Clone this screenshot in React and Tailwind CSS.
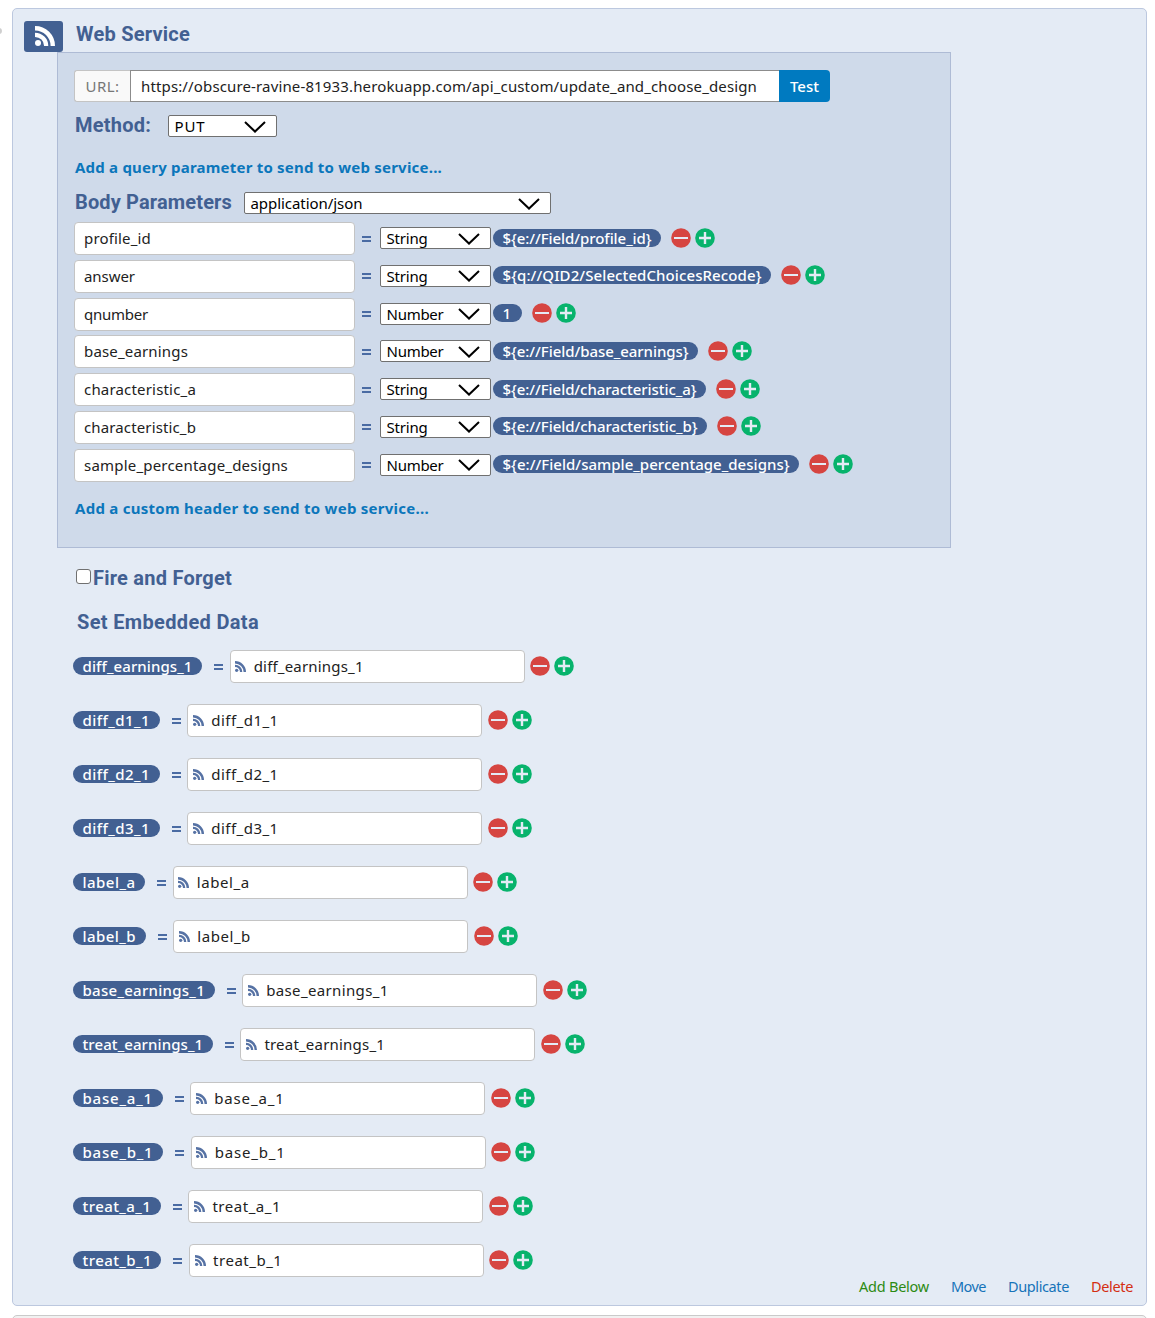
import { useLayoutEffect, useRef } from "react";

// Text set to a given width by adjusting its tracking.
function Fit({ w, children, className = "" }) {
  const ref = useRef(null);
  useLayoutEffect(() => {
    const el = ref.current;
    el.style.letterSpacing = "0px";
    const natural = el.firstChild.getBoundingClientRect().width;
    el.style.letterSpacing = `${(w - natural) / children.length}px`;
  }, [w, children]);
  return (
    <span ref={ref} className={`inline-block whitespace-nowrap ${className}`} style={{ width: w }}>
      <span>{children}</span>
    </span>
  );
}

function Rss({ className }) {
  return (
    <svg viewBox="0 0 20 20" className={className} fill="none" stroke="currentColor">
      <circle cx="3" cy="17" r="3" fill="currentColor" stroke="none" />
      <path d="M0 8.8A11.2 11.2 0 0 1 11.2 20" strokeWidth="4.2" />
      <path d="M0 2.2A17.8 17.8 0 0 1 17.8 20" strokeWidth="4.4" />
    </svg>
  );
}

function Actions({ className = "" }) {
  return (
    <div className={`mb-0.5 flex shrink-0 gap-1 ${className}`}>
      <svg viewBox="0 0 20 20" className="size-5">
        <circle cx="10" cy="10" r="9.8" fill="#d64541" />
        <path d="M3 10H17" stroke="#e4ebf5" strokeWidth="2" />
      </svg>
      <svg viewBox="0 0 20 20" className="size-5">
        <circle cx="10" cy="10" r="9.8" fill="#07b36c" />
        <path d="M4 10H16M10 4V16" stroke="#e4ebf5" strokeWidth="2.4" />
      </svg>
    </div>
  );
}

function Select({ label, w, className }) {
  return (
    <div className={`flex h-[22px] shrink-0 items-center justify-between rounded-[2px] border border-[#707070] bg-white pl-[5.5px] pr-[10.5px] text-black ${className}`}>
      <Fit w={w}>{label}</Fit>
      <svg viewBox="0 0 22 12" className="mt-px h-3 w-[22px]" fill="none" stroke="#000" strokeWidth="2">
        <path d="M1 1L11 10.5L21 1" />
      </svg>
    </div>
  );
}

function Pill({ label, w }) {
  return (
    <div className="mb-0.5 flex h-[18px] shrink-0 items-center rounded-full bg-[#426092] pl-[9.5px] font-medium text-white" style={{ width: w }}>
      <Fit w={w - 19}>{label}</Fit>
    </div>
  );
}

function Equals({ className }) {
  return (
    <svg viewBox="0 0 9 6" className={`h-1.5 w-[9px] shrink-0 ${className}`}>
      <path d="M0 1H9M0 5H9" stroke="#4a6ba3" strokeWidth="2" />
    </svg>
  );
}

const params = [
  ["profile_id", 67, "String", 41, "${e://Field/profile_id}", 168],
  ["answer", 51, "String", 41, "${q://QID2/SelectedChoicesRecode}", 278],
  ["qnumber", 64, "Number", 57, "1", 29],
  ["base_earnings", 104, "Number", 57, "${e://Field/base_earnings}", 205],
  ["characteristic_a", 112, "String", 41, "${e://Field/characteristic_a}", 213],
  ["characteristic_b", 112, "String", 41, "${e://Field/characteristic_b}", 214],
  ["sample_percentage_designs", 204, "Number", 57, "${e://Field/sample_percentage_designs}", 306],
];

const fields = [
  ["diff_earnings_1", 129],
  ["diff_d1_1", 86.5],
  ["diff_d2_1", 86.5],
  ["diff_d3_1", 86.5],
  ["label_a", 72],
  ["label_b", 72.6],
  ["base_earnings_1", 141.5],
  ["treat_earnings_1", 139.7],
  ["base_a_1", 89.5],
  ["base_b_1", 90],
  ["treat_a_1", 87.7],
  ["treat_b_1", 88.4],
];

const heading = "text-[20px] leading-6 font-bold text-[#426092] font-['Roboto',sans-serif]";

export default function App() {
  return (
    <div className="flex h-[1318px] w-[1155px] overflow-hidden bg-white font-['Noto_Sans',sans-serif] text-[15px] leading-[18px] text-[#222]">
      <div className="mt-7 h-1.5 w-3 shrink-0">
        <div className="-ml-1 size-1.5 rounded-full bg-[#cfcfcf]" />
      </div>
      <div className="mt-2 w-[1135px] shrink-0">
        <section className="flex h-[1298px] flex-col rounded-[5px] border border-[#bcc8df] bg-[#e4ebf5]">
          <header className="flex h-[43px] shrink-0 pl-[11px] pt-3">
            <div className="relative z-10 flex h-[31px] w-[39px] items-center justify-center rounded-[3px] bg-[#426092] text-white">
              <Rss className="mb-px ml-[2px] size-5" />
            </div>
            <h2 className={`ml-[13px] mt-px ${heading}`}><Fit w={114}>Web Service</Fit></h2>
          </header>

          <div className="ml-11 h-[496px] w-[894px] shrink-0 border border-[#aebbd5] bg-[#cfdaea] pl-4 pt-[17px]">
            <div className="flex h-8 w-[756px]">
              <div className="flex w-14 items-center rounded-l-[3px] border border-r-0 border-[#c4c4c4] bg-[#f9f9f9] pb-px pl-[10.5px] text-[#777]">
                <Fit w={34}>URL:</Fit>
              </div>
              <div className="flex w-[649px] items-center border border-r-0 border-[#8c8c8c] bg-white pl-2.5">
                <Fit w={616}>https://obscure-ravine-81933.herokuapp.com/api_custom/update_and_choose_design</Fit>
              </div>
              <div className="flex flex-1 items-center rounded-r-[4px] bg-[#007ac0] pb-px pl-[11px] font-medium text-white">
                <Fit w={29}>Test</Fit>
              </div>
            </div>

            <div className="mt-[11px] flex h-6 items-center">
              <h3 className={`ml-px ${heading}`}><Fit w={76}>Method:</Fit></h3>
              <Select label="PUT" w={31} className="mt-0.5 ml-[17px] w-[109px]" />
            </div>

            <div className="ml-px mt-[21px] h-[22px] font-bold text-[#0b76bb]">
              <Fit w={367}>Add a query parameter to send to web service...</Fit>
            </div>

            <div className="mt-2.5 flex h-6 items-center">
              <h3 className={`ml-px ${heading}`}><Fit w={157}>Body Parameters</Fit></h3>
              <Select label="application/json" w={112} className="mt-0.5 ml-3 w-[307px]" />
            </div>

            <div className="mt-2 flex flex-col gap-[4.8px]">
              {params.map(([name, nw, type, tw, value, vw]) => (
                <div key={name} className="flex h-[33px] items-center">
                  <div className="flex h-[33px] w-[281px] shrink-0 items-center rounded-[4px] border border-[#c4c4c4] bg-white pb-px pl-[9px]">
                    <Fit w={nw}>{name}</Fit>
                  </div>
                  <Equals className="ml-[7px]" />
                  <Select label={type} w={tw} className="mb-px ml-[9px] w-[111px]" />
                  <div className="ml-0.5 flex items-center">
                    <Pill label={value} w={vw} />
                    <Actions className="ml-2.5" />
                  </div>
                </div>
              ))}
            </div>

            <div className="ml-px mt-[17px] font-bold text-[#0b76bb]">
              <Fit w={354}>Add a custom header to send to web service...</Fit>
            </div>
          </div>

          <div className="ml-[63px] mt-[18px] flex h-6 items-center">
            <div className="mb-[3px] size-[15px] rounded-[3px] border border-[#707070] bg-white" />
            <h3 className={`ml-0.5 ${heading}`}><Fit w={139}>Fire and Forget</Fit></h3>
          </div>
          <h3 className={`ml-16 mt-5 ${heading}`}><Fit w={182}>Set Embedded Data</Fit></h3>

          <div className="ml-[60px] mt-4 flex flex-col gap-[21px]">
            {fields.map(([name, w]) => (
              <div key={name} className="flex h-[33px] items-center">
                <Pill label={name} w={w} />
                <Equals className="ml-3" />
                <div className="ml-[6.5px] flex h-[33px] w-[295px] items-center rounded-[4px] border border-[#c4c4c4] bg-white pl-[4.7px]">
                  <Rss className="size-[11px] text-[#5672a4]" />
                  <Fit w={w - 19} className="mb-px ml-[7.5px]">{name}</Fit>
                </div>
                <Actions className="ml-[5.5px]" />
              </div>
            ))}
          </div>

          <footer className="mr-[13px] flex justify-end gap-[22px] text-[14.5px]">
            <Fit w={70} className="text-[#2c8a12]">Add Below</Fit>
            <Fit w={35} className="text-[#1673b9]">Move</Fit>
            <Fit w={61} className="text-[#1673b9]">Duplicate</Fit>
            <Fit w={42} className="text-[#d42e12]">Delete</Fit>
          </footer>
        </section>
        <div className="mt-[9px] h-5 rounded-[5px] border border-[#cacaca] bg-[#f1f1f1]" />
      </div>
    </div>
  );
}
